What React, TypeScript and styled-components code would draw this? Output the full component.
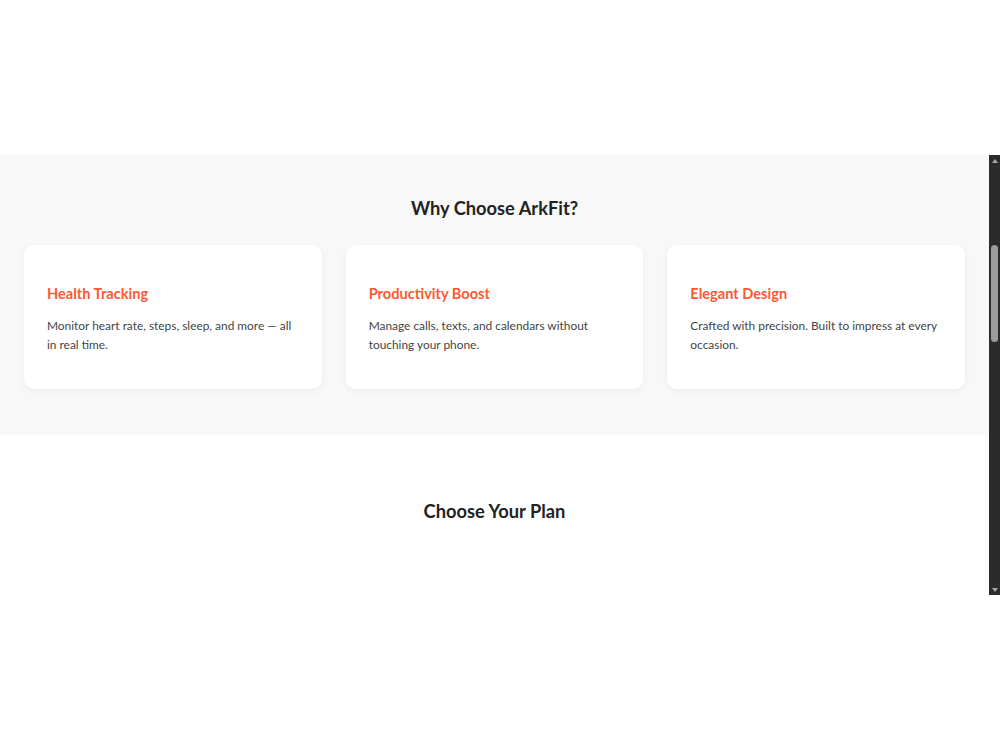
import styled, { createGlobalStyle } from "styled-components";

const GlobalStyle = createGlobalStyle`
  * {
    box-sizing: border-box;
  }

  body {
    margin: 0;
    background: #fff;
    font-family: Lato, "Noto Sans", sans-serif;
    color: #333;
  }

  h2, h3, p {
    margin: 0;
  }
`

const TopSpace = styled.div`
  height: 155px;
`

const Frame = styled.div`
  display: flex;
  height: 440px;
`

const Viewport = styled.div`
  flex: 1;
  min-width: 0;
  overflow: hidden;
`

const ScrollBar = styled.div`
  width: 11px;
  flex-shrink: 0;
  display: flex;
  flex-direction: column;
  background: #2b2b2b;
`

const Arrow = styled.div<{ $down?: boolean }>`
  height: 11px;
  display: flex;
  align-items: center;
  justify-content: center;

  &::before {
    content: "";
    border-left: 3px solid transparent;
    border-right: 3px solid transparent;
    ${(p) => (p.$down ? "border-top: 4px solid #a8a8a8;" : "border-bottom: 4px solid #a8a8a8;")}
  }
`

const Track = styled.div<{ $offset: number }>`
  flex: 1;
  display: flex;
  justify-content: center;
  padding-top: ${(p) => p.$offset}px;
`

const Thumb = styled.div<{ $size: number }>`
  width: 7px;
  height: ${(p) => p.$size}px;
  border-radius: 4px;
  background: #9c9c9c;
`

const Features = styled.section`
  background: #f8f8f8;
  padding: 41px 24px 46px;
`

const SectionTitle = styled.h2`
  font-size: 18.3px;
  font-weight: 700;
  color: #222;
  text-align: center;
  line-height: 24px;
`

const CardGrid = styled.div`
  display: grid;
  grid-template-columns: repeat(3, 1fr);
  gap: 24px;
  margin-top: 25px;
`

const Card = styled.div`
  background: #fff;
  border-radius: 10px;
  box-shadow: 0 2px 8px rgba(0, 0, 0, 0.05);
  padding: 39px 23px 36px;
  height: 144px;
`

const CardTitle = styled.h3`
  font-size: 14.6px;
  font-weight: 700;
  color: #ff5733;
  line-height: 19px;
`

const CardText = styled.p`
  margin-top: 13px;
  font-size: 11.9px;
  line-height: 19px;
  color: #444;
`

const Plans = styled.section`
  padding: 64px 24px;
`

const features = [
  {
    title: "Health Tracking",
    text: "Monitor heart rate, steps, sleep, and more — all in real time.",
  },
  {
    title: "Productivity Boost",
    text: "Manage calls, texts, and calendars without touching your phone.",
  },
  {
    title: "Elegant Design",
    text: "Crafted with precision. Built to impress at every occasion.",
  },
]

export default function App() {
  return (
    <>
      <GlobalStyle />
      <TopSpace />
      <Frame>
        <Viewport>
          <Features>
            <SectionTitle>Why Choose ArkFit?</SectionTitle>
            <CardGrid>
              {features.map((item) => (
                <Card key={item.title}>
                  <CardTitle>{item.title}</CardTitle>
                  <CardText>{item.text}</CardText>
                </Card>
              ))}
            </CardGrid>
          </Features>
          <Plans>
            <SectionTitle>Choose Your Plan</SectionTitle>
          </Plans>
        </Viewport>
        <ScrollBar>
          <Arrow />
          <Track $offset={79}>
            <Thumb $size={97} />
          </Track>
          <Arrow $down />
        </ScrollBar>
      </Frame>
    </>
  )
}
